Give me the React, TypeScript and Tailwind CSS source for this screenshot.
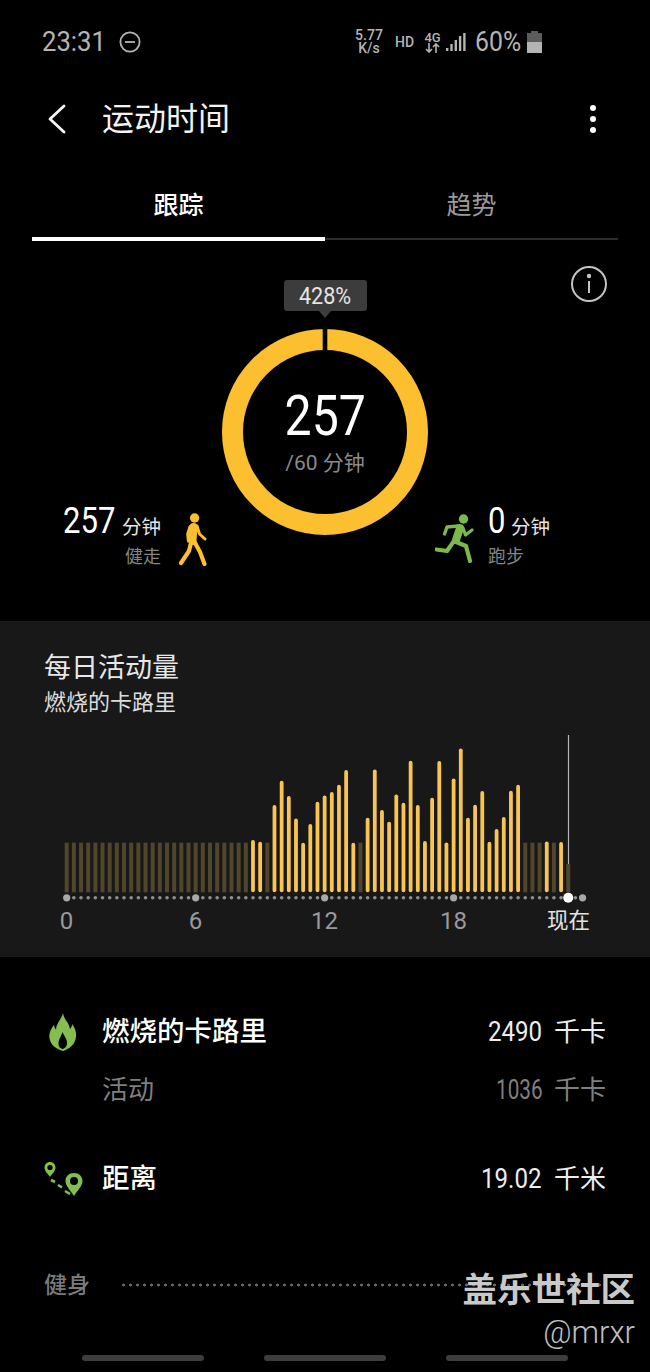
import React from 'react';

// top of every bar in chart px, measured from y=730; dim bars are the idle ones
const BASE = 162.3;
const dimTop = 112.7;
const bright: Record<number, number> = {
  26: 110, 27: 111.7, 29: 75, 30: 50.7, 31: 66, 32: 88.3, 33: 112.7, 34: 94, 35: 71.7, 36: 65.3,
  37: 62, 38: 54.7, 39: 40, 40: 112.7, 42: 87.7, 43: 39.3, 44: 80, 45: 91.7, 46: 64.3, 47: 72.7,
  48: 30.7, 49: 75, 50: 111, 51: 67.7, 52: 31, 53: 112.3, 54: 48.3, 55: 18.3, 56: 87.7, 57: 74.7,
  58: 61, 59: 111.7, 60: 99, 61: 87, 62: 60.7, 63: 54.7, 67: 111.3, 69: 112,
};

function barX(i: number) {
  return 66.7 + i * 7.165;
}

function ActivityChart() {
  const bars = Array.from({ length: 71 }, (_, i) => i);
  const dots = Array.from({ length: 73 }, (_, i) => i);
  return (
    <svg className="block" width="650" height="175" viewBox="0 0 650 175">
      {bars.map((i) => {
        const top = bright[i];
        if (top !== undefined) {
          return <line key={i} x1={barX(i)} x2={barX(i)} y1={top + 2} y2={BASE - 2} stroke="#f8c552" strokeWidth="3.8" strokeLinecap="round" />;
        }
        return <rect key={i} x={barX(i) - 2} y={i === 70 ? 134 : dimTop} width="4" height={BASE - (i === 70 ? 134 : dimTop)} fill="#50462c" />;
      })}
      <line x1="568.5" x2="568.5" y1="5" y2="134" stroke="#b5b5b5" strokeWidth="1.2" />
      {dots.map((i) => {
        const big = i % 18 === 0 || i === 72;
        return <circle key={i} cx={barX(i)} cy="167.8" r={big ? 3.6 : 1.8} fill={big ? '#a8a8a8' : '#8f8f8f'} />;
      })}
      <circle cx={barX(70)} cy="167.8" r="5" fill="#ffffff" />
    </svg>
  );
}

function Ring() {
  return (
    <svg className="block" width="206" height="206" viewBox="0 0 206 206">
      <circle cx="103" cy="103" r="92.5" fill="none" stroke="#fbbf2f" strokeWidth="21" />
      <rect x="100.7" y="0" width="4.6" height="23" fill="#000000" />
    </svg>
  );
}

function Walker() {
  return (
    <svg width="28" height="53" viewBox="0 0 28 53" fill="none" stroke="#fbbf2f" strokeLinecap="round" strokeLinejoin="round">
      <circle cx="15.6" cy="5" r="4.7" fill="#fbbf2f" stroke="none" />
      <path d="M14.5 14 L13.5 28" strokeWidth="8" />
      <path d="M11 14 L8.8 21 L9.5 28" strokeWidth="3.2" />
      <path d="M18 13 L20.5 21 L26 26" strokeWidth="3" />
      <path d="M12.5 28 L10 38 L2 50" strokeWidth="4.2" />
      <path d="M15 28 L21 39 L25.5 51" strokeWidth="4.2" />
    </svg>
  );
}

function Runner() {
  return (
    <svg width="39" height="49" viewBox="0 0 39 49" fill="none" stroke="#7cb84a" strokeLinecap="round" strokeLinejoin="round">
      <circle cx="28.5" cy="5" r="4.7" fill="#7cb84a" stroke="none" />
      <path d="M25 14 L21 26" strokeWidth="8" />
      <path d="M23 12 L12 13 L9.5 20" strokeWidth="3.4" />
      <path d="M28 14 L30.5 21 L37 16" strokeWidth="3.2" />
      <path d="M19 27 L12 37 L1.5 35.5" strokeWidth="4.2" />
      <path d="M21 28 L31 32 L35 47" strokeWidth="4.2" />
    </svg>
  );
}

function Flame() {
  return (
    <svg width="28" height="38" viewBox="0 0 28 38">
      <path
        d="M14 0 C15 7 20 9 21 16 C22.5 14.5 23 13 23 11 C26.5 15 27.5 20 27 24 C26 32 20 36 14 38 C7 36 1 32 0.3 24 C0 19 2.5 15 5 12 C5.5 14.5 6 15.5 7 16.5 C7.5 10 12 7 14 0 Z"
        fill="#84bd50"
      />
      <path d="M13.5 19 C15 23 18.5 26 18 31 C17.5 34 15.5 35.5 13.5 36 C11 35.5 9.5 33.5 9.5 31 C9.5 26 12.5 23 13.5 19 Z" fill="#000000" />
    </svg>
  );
}

function RouteIcon() {
  return (
    <svg width="40" height="35" viewBox="0 0 40 35" fill="none">
      <path d="M6 0 C9.5 0 11.5 2.5 11.5 5.5 C11.5 9 8 12 6 15 C4 12 0.5 9 0.5 5.5 C0.5 2.5 2.5 0 6 0 Z" fill="#84bd50" />
      <circle cx="6" cy="5.5" r="2.6" fill="#000000" />
      <path d="M30 11 C35 11 38.5 14.5 38.5 19 C38.5 24 33 29 30 34 C27 29 21.5 24 21.5 19 C21.5 14.5 25 11 30 11 Z" fill="#84bd50" />
      <circle cx="30" cy="19" r="4" fill="#000000" />
      <path d="M7 18 L11 20 M14 23 L18 25.5 M21 29 L26 32" stroke="#84bd50" strokeWidth="2.6" />
    </svg>
  );
}

function StatusBar() {
  return (
    <div className="flex h-[84px] items-center pl-[42px] text-[#b4b4b4]">
      <span className="inline-block w-[62px] origin-left scale-x-95 whitespace-nowrap text-[27px] leading-none">23:31</span>
      <svg className="ml-[15px]" width="22" height="22" viewBox="0 0 22 22" fill="none" stroke="#b4b4b4" strokeWidth="1.8">
        <circle cx="11" cy="11" r="9.6" />
        <path d="M6 11 H16" />
      </svg>
      <div className="ml-[214px] flex w-[28px] flex-col items-center text-[14px] font-medium leading-[13px]">
        <span>5.77</span>
        <span>K/s</span>
      </div>
      <span className="ml-[12px] w-[18px] whitespace-nowrap text-[14px] font-medium leading-none">HD</span>
      <div className="ml-[12px] flex w-[15px] flex-col items-center">
        <span className="text-[13px] font-medium leading-[11px]">4G</span>
        <svg width="15" height="10" viewBox="0 0 15 10" fill="none" stroke="#b4b4b4" strokeWidth="1.6">
          <path d="M4 0 V9 M1 6 L4 9 L7 6 M11 10 V1 M8 4 L11 1 L14 4" />
        </svg>
      </div>
      <svg className="ml-[6px]" width="20" height="20" viewBox="0 0 20 20" fill="#b4b4b4">
        <rect x="0" y="16" width="2.4" height="3" />
        <rect x="4.3" y="12" width="2.4" height="7" />
        <rect x="8.6" y="8" width="2.4" height="11" />
        <rect x="12.9" y="4" width="2.4" height="15" />
        <rect x="17.2" y="1" width="2.4" height="18" />
      </svg>
      <span className="ml-[9px] inline-block w-[47px] origin-left scale-x-[0.92] whitespace-nowrap text-[27px] leading-none">60%</span>
      <svg className="ml-[5px]" width="15" height="22" viewBox="0 0 15 22">
        <rect x="4" y="0" width="7" height="3" fill="#5c5c5c" />
        <rect x="0" y="2" width="15" height="10" fill="#5c5c5c" />
        <rect x="0" y="11" width="15" height="11" fill="#b4b4b4" />
      </svg>
    </div>
  );
}

function Header() {
  return (
    <div className="flex h-[70px] items-center pl-[47px] pr-[54px]">
      <svg width="20" height="30" viewBox="0 0 20 30" fill="none" stroke="#f5f5f5" strokeWidth="2.8" strokeLinecap="round" strokeLinejoin="round">
        <path d="M17 2 L3 15 L17 28" />
      </svg>
      <h1 className="ml-[35px] flex-1 text-[32px] leading-none text-[#f2f2f2]">运动时间</h1>
      <div className="flex flex-col gap-[4.5px]">
        <span className="h-[6.5px] w-[6.5px] rounded-full bg-white" />
        <span className="h-[6.5px] w-[6.5px] rounded-full bg-white" />
        <span className="h-[6.5px] w-[6.5px] rounded-full bg-white" />
      </div>
    </div>
  );
}

function Tabs() {
  return (
    <div className="mx-[32px] flex h-[87px]">
      <div className="flex w-[293px] flex-col">
        <div className="flex flex-1 items-center justify-center pt-[20px] text-[25px] font-medium text-white">跟踪</div>
        <div className="h-[4px] bg-white" />
      </div>
      <div className="flex flex-1 flex-col">
        <div className="flex flex-1 items-center justify-center pt-[20px] text-[25px] text-[#9a9a9a]">趋势</div>
        <div className="mb-[1px] h-[2px] bg-[#2c2c2c]" />
      </div>
    </div>
  );
}

function GoalSection() {
  return (
    <div className="relative grid h-[380px] grid-cols-[222px_206px_1fr] items-end pb-[54px] pt-[39px]">
      <div className="flex items-end justify-end gap-[18px] pr-[15px]">
        <div className="text-right">
          <div className="flex h-[34px] items-end justify-end">
            <span className="inline-block w-[52px] origin-left scale-x-[0.84] whitespace-nowrap text-left text-[37px] leading-[34px] text-white">257</span>
            <span className="ml-[7px] text-[19.5px] leading-[20px] text-[#e6e6e6]">分钟</span>
          </div>
          <div className="mt-[9px] text-[18px] leading-[20px] text-[#858585]">健走</div>
        </div>
        <div className="mb-[1px]">
          <Walker />
        </div>
      </div>
      <div className="flex flex-col items-center pb-[32px]">
        <div className="flex h-[31px] w-[83px] items-center justify-center rounded-[3px] bg-[#3c3c3c]">
          <span className="inline-block scale-x-90 text-[24px] leading-none text-[#e4e4e4]">428%</span>
        </div>
        <div className="h-0 w-0 border-x-[6px] border-t-[7px] border-x-transparent border-t-[#3c3c3c]" />
        <div className="relative mt-[11px]">
          <Ring />
          <div className="absolute inset-0 flex flex-col items-center justify-center pt-[4px]">
            <span className="inline-block h-[48px] scale-x-[0.86] text-[56px] leading-[48px] text-white">257</span>
            <span className="mt-[10px] text-[21px] leading-[26px] text-[#8a8a8a]">/60 分钟</span>
          </div>
        </div>
      </div>
      <div className="flex items-end gap-[14px] pl-[7px]">
        <div className="mb-[4px]">
          <Runner />
        </div>
        <div>
          <div className="flex h-[34px] items-end">
            <span className="inline-block w-[17px] origin-left scale-x-[0.84] text-[37px] leading-[34px] text-white">0</span>
            <span className="ml-[6px] text-[19.5px] leading-[20px] text-[#e6e6e6]">分钟</span>
          </div>
          <div className="mt-[9px] text-[18px] leading-[20px] text-[#858585]">跑步</div>
        </div>
      </div>
      <svg className="absolute right-[43px] top-[25px]" width="36" height="36" viewBox="0 0 36 36" fill="none" stroke="#c4c4c4" strokeWidth="2">
        <circle cx="18" cy="18" r="17" />
        <path d="M18 15 V27" />
        <circle cx="18" cy="10" r="1.2" fill="#c4c4c4" />
      </svg>
    </div>
  );
}

function DailyCard() {
  return (
    <div className="h-[336px] bg-[#181818] pt-[27px]">
      <div className="h-[38px] pl-[44px] text-[27px] leading-[40px] text-[#e8e8e8]">每日活动量</div>
      <div className="h-[34px] pl-[44px] text-[22px] leading-[34px] text-[#dcdcdc]">燃烧的卡路里</div>
      <div className="mt-[10px]">
        <ActivityChart />
      </div>
      <div className="grid h-[32px] grid-cols-[129px_129px_129px_129px_101px] pl-[2px] text-center text-[24px] leading-[32px] text-[#9a9a9a]">
        <span>0</span>
        <span>6</span>
        <span>12</span>
        <span>18</span>
        <span className="text-[21.5px] text-[#e4e4e4]">现在</span>
      </div>
    </div>
  );
}

function Amount({ digits, digitClass, unit, tone }: { digits: string; digitClass: string; unit: string; tone: string }) {
  return (
    <span className={`flex items-center text-[28px] leading-none ${tone}`}>
      <span className={`inline-block origin-left whitespace-nowrap text-left ${digitClass}`}>{digits}</span>
      <span className="ml-[12px] text-[26px]">{unit}</span>
    </span>
  );
}

function Summary() {
  return (
    <div className="pt-[46px]">
      <div className="flex h-[58px] items-center justify-between pr-[44px]">
        <div className="flex items-center">
          <div className="ml-[49px] w-[53px]">
            <Flame />
          </div>
          <span className="text-[27.5px] font-medium leading-none text-white">燃烧的卡路里</span>
        </div>
        <Amount digits="2490" digitClass="w-[54px] scale-x-[0.86]" unit="千卡" tone="text-[#ededed]" />
      </div>
      <div className="flex h-[58px] items-center justify-between pl-[102px] pr-[44px] text-[26px] leading-none text-[#7f7f7f]">
        <span>活动</span>
        <Amount digits="1036" digitClass="w-[46px] scale-x-[0.74]" unit="千卡" tone="text-[#7f7f7f]" />
      </div>
      <div className="mt-[31px] flex h-[58px] items-center justify-between pr-[44px]">
        <div className="flex items-center">
          <div className="ml-[44px] w-[58px]">
            <RouteIcon />
          </div>
          <span className="text-[27.5px] font-medium leading-none text-white">距离</span>
        </div>
        <Amount digits="19.02" digitClass="w-[61px] scale-x-[0.86]" unit="千米" tone="text-[#ededed]" />
      </div>
      <div className="mt-[48px] flex h-[58px] items-center pl-[44px] pr-[44px]">
        <span className="text-[23px] font-medium leading-none text-[#7a7a7a]">健身</span>
        <div className="ml-[30px] h-[4px] flex-1 bg-[radial-gradient(circle,#666666_1.3px,transparent_1.7px)] bg-[length:7px_4px]" />
      </div>
    </div>
  );
}

export default function App() {
  return (
    <div className="relative h-[1372px] w-[650px] overflow-hidden bg-black font-['Roboto','Noto_Sans_CJK_SC',sans-serif]">
      <StatusBar />
      <Header />
      <Tabs />
      <GoalSection />
      <DailyCard />
      <Summary />
      <div className="mt-[41px] flex justify-center gap-[60px]">
        <div className="h-[6px] w-[122px] rounded-full bg-[#3d3d3d]" />
        <div className="h-[6px] w-[122px] rounded-full bg-[#3d3d3d]" />
        <div className="h-[6px] w-[122px] rounded-full bg-[#3d3d3d]" />
      </div>
      {/* watermark sits over the page */}
      <div className="absolute right-[15px] top-[1270px] flex flex-col items-end">
        <span className="text-[34.5px] font-bold leading-[40px] text-[#c9c9c9]">盖乐世社区</span>
        <span className="mt-[4px] text-[31px] font-light leading-[38px] text-[#c0c0c0]">@mrxr</span>
      </div>
    </div>
  );
}
